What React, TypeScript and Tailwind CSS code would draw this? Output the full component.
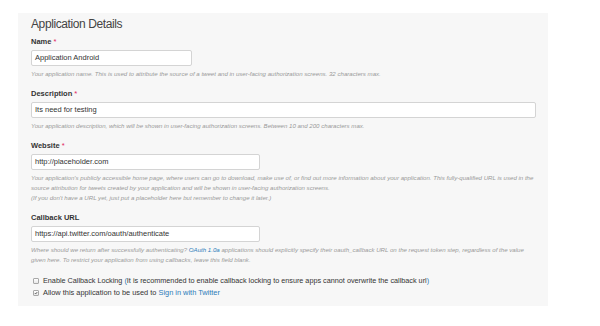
import React from "react";

const font = { fontFamily: '"Liberation Sans", Arial, sans-serif' };

type FieldProps = {
  label: string;
  required?: boolean;
  value: string;
  inputWidth: string;
  children: React.ReactNode;
};

const Field: React.FC<FieldProps> = ({ label, required, value, inputWidth, children }) => {
  return (
    <div className="mb-[10px]">
      <div className="text-[7.5px] leading-[10px] font-bold text-[#333]">
        {label}
        {required && <span className="text-[#e0245e] font-normal"> *</span>}
      </div>
      <div
        className={`${inputWidth} mt-[3px] h-[16px] bg-white border border-[#d4d4d4] rounded-[2px] px-[3px] flex items-center text-[7.5px] text-[#333]`}
      >
        {value}
      </div>
      <div className="mt-[3px] text-[6.1px] leading-[10px] italic text-[#999]">{children}</div>
    </div>
  );
};

const Checkbox: React.FC<{ checked?: boolean }> = ({ checked }) => (
  <span className="w-[6px] h-[6px] border border-[#a8a8a8] rounded-[1px] bg-gradient-to-b from-white to-[#e8e8e8] flex items-center justify-center shrink-0">
    {checked && (
      <svg viewBox="0 0 10 10" className="w-[6px] h-[6px]">
        <path d="M2 5.2 L4.2 7.4 L8.2 2.6" fill="none" stroke="#333" strokeWidth="1.8" />
      </svg>
    )}
  </span>
);

export default function App() {
  return (
    <div className="w-[600px] h-[326px] bg-white pt-[13px] pl-[18px]" style={font}>
      <div className="w-[530px] h-[293px] bg-[#f7f7f7] pl-[13px] pr-[12px] pt-[4px]">
        <h2 className="text-[12px] leading-[14px] tracking-[-0.4px] text-[#444] font-normal">
          Application Details
        </h2>

        <div className="mt-[6px]">
          <Field label="Name" required value="Application Android" inputWidth="w-[161px]">
            Your application name. This is used to attribute the source of a tweet and in user-facing authorization screens. 32 characters max.
          </Field>

          <Field label="Description" required value="Its need for testing" inputWidth="w-[505px]">
            Your application description, which will be shown in user-facing authorization screens. Between 10 and 200 characters max.
          </Field>

          <Field label="Website" required value="http://placeholder.com" inputWidth="w-[229px]">
            <span className="block whitespace-nowrap">
              Your application's publicly accessible home page, where users can go to download, make use of, or find out more information about your application. This fully-qualified URL is used in the
            </span>
            <span className="block whitespace-nowrap">
              source attribution for tweets created by your application and will be shown in user-facing authorization screens.
            </span>
            <span className="block whitespace-nowrap">
              (If you don't have a URL yet, just put a placeholder here but remember to change it later.)
            </span>
          </Field>

          <Field label="Callback URL" value="https://api.twitter.com/oauth/authenticate" inputWidth="w-[229px]">
            <span className="block whitespace-nowrap">
              Where should we return after successfully authenticating?{" "}
              <span className="text-[#2b7bb9]">OAuth 1.0a</span> applications should explicitly specify their oauth_callback URL on the request token step, regardless of the value
            </span>
            <span className="block whitespace-nowrap">
              given here. To restrict your application from using callbacks, leave this field blank.
            </span>
          </Field>
        </div>

        <div className="mt-[8px] flex flex-col text-[7.4px] text-[#333]">
          <label className="flex items-center gap-[4px] h-[12px] pl-[2px]">
            <Checkbox />
            <span className="text-[7.25px]">
              Enable Callback Locking <span className="text-[#2b7bb9]">(</span>It is recommended to enable callback locking to ensure apps cannot overwrite the callback url<span className="text-[#2b7bb9]">)</span>
            </span>
          </label>
          <label className="flex items-center gap-[4px] h-[12px] pl-[2px]">
            <Checkbox checked />
            <span>
              Allow this application to be used to <span className="text-[#2b7bb9]">Sign in with Twitter</span>
            </span>
          </label>
        </div>
      </div>
    </div>
  );
}
